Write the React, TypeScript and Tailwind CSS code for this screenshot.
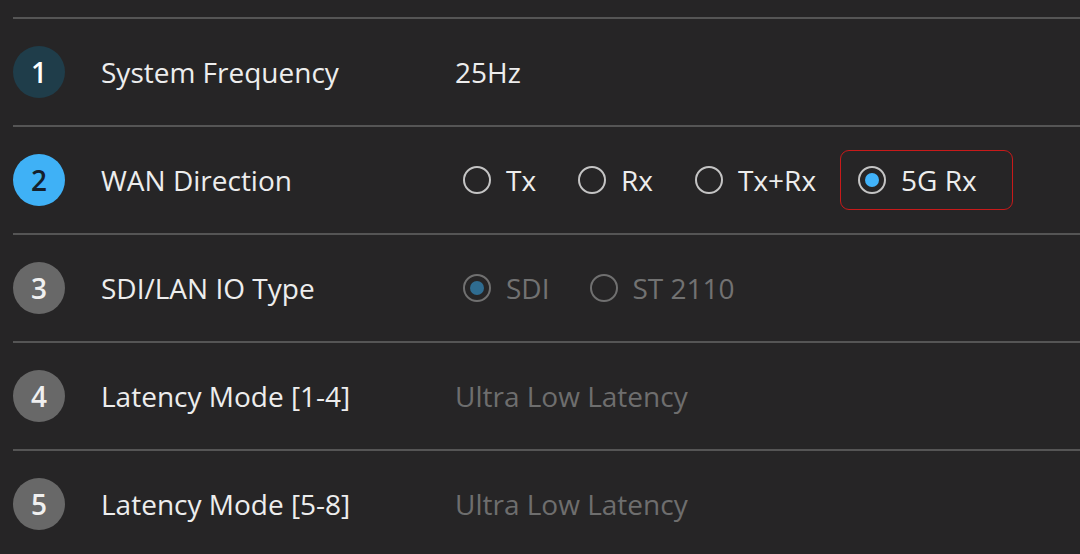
import React from 'react';

type Radio = { label: string; checked?: boolean };

function Badge({ n, tone }: { n: number; tone: 'teal' | 'blue' | 'gray' }) {
  const cls =
    tone === 'teal'
      ? 'bg-[#1f3d4a] text-white'
      : tone === 'blue'
      ? 'bg-[#3fb1f6] text-[#15202b]'
      : 'bg-[#686868] text-[#f0f0f0]';
  return (
    <div className={`w-[52px] h-[52px] rounded-full flex items-center justify-center text-[28px] font-semibold leading-none ${cls}`}>
      {n}
    </div>
  );
}

function RadioDot({ checked, disabled }: { checked?: boolean; disabled?: boolean }) {
  return (
    <span
      className={`w-[28px] h-[28px] rounded-full border-[2.5px] flex items-center justify-center shrink-0 ${
        disabled ? 'border-[#707070]' : 'border-[#c4c4c4]'
      }`}
    >
      {checked && (
        <span className={`w-[14px] h-[14px] rounded-full ${disabled ? 'bg-[#2f6c90]' : 'bg-[#41b3fa]'}`} />
      )}
    </span>
  );
}

function Row({ n, tone, label, children }: { n: number; tone: 'teal' | 'blue' | 'gray'; label: string; children: React.ReactNode }) {
  return (
    <div className="h-[108px] border-t-2 border-[#555555] flex items-center">
      <Badge n={n} tone={tone} />
      <div className="ml-[36px] w-[354px] text-[#ededed]">{label}</div>
      <div className="flex items-center">{children}</div>
    </div>
  );
}

export default function App() {
  const wan: Radio[] = [{ label: 'Tx' }, { label: 'Rx' }, { label: 'Tx+Rx' }];

  return (
    <div
      className="w-[1080px] h-[554px] overflow-hidden bg-[#262526] pt-[17px] pl-[13px] text-[28px]"
      style={{ fontFamily: '"Open Sans", "Noto Sans", sans-serif' }}
    >
      <Row n={1} tone="teal" label="System Frequency">
        <span className="text-[#ededed]">25Hz</span>
      </Row>

      <Row n={2} tone="blue" label="WAN Direction">
        <div className="flex items-center gap-[42px] pl-[8px]">
          {wan.map(r => (
            <label key={r.label} className="flex items-center gap-[15px] text-[#ededed]">
              <RadioDot />
              {r.label}
            </label>
          ))}
        </div>
        <div className="ml-[24px] w-[173px] h-[60px] rounded-[9px] border-[1.5px] border-[#c81a1a] flex items-center pl-[17px] gap-[15px] text-[#ededed]">
          <RadioDot checked />
          5G Rx
        </div>
      </Row>

      <Row n={3} tone="gray" label="SDI/LAN IO Type">
        <div className="flex items-center gap-[40px] pl-[8px] text-[#727272]">
          <label className="flex items-center gap-[15px]">
            <RadioDot checked disabled />
            SDI
          </label>
          <label className="flex items-center gap-[15px]">
            <RadioDot disabled />
            ST 2110
          </label>
        </div>
      </Row>

      <Row n={4} tone="gray" label="Latency Mode [1-4]">
        <span className="text-[#6e6e6e]">Ultra Low Latency</span>
      </Row>

      <Row n={5} tone="gray" label="Latency Mode [5-8]">
        <span className="text-[#6e6e6e]">Ultra Low Latency</span>
      </Row>
    </div>
  );
}
